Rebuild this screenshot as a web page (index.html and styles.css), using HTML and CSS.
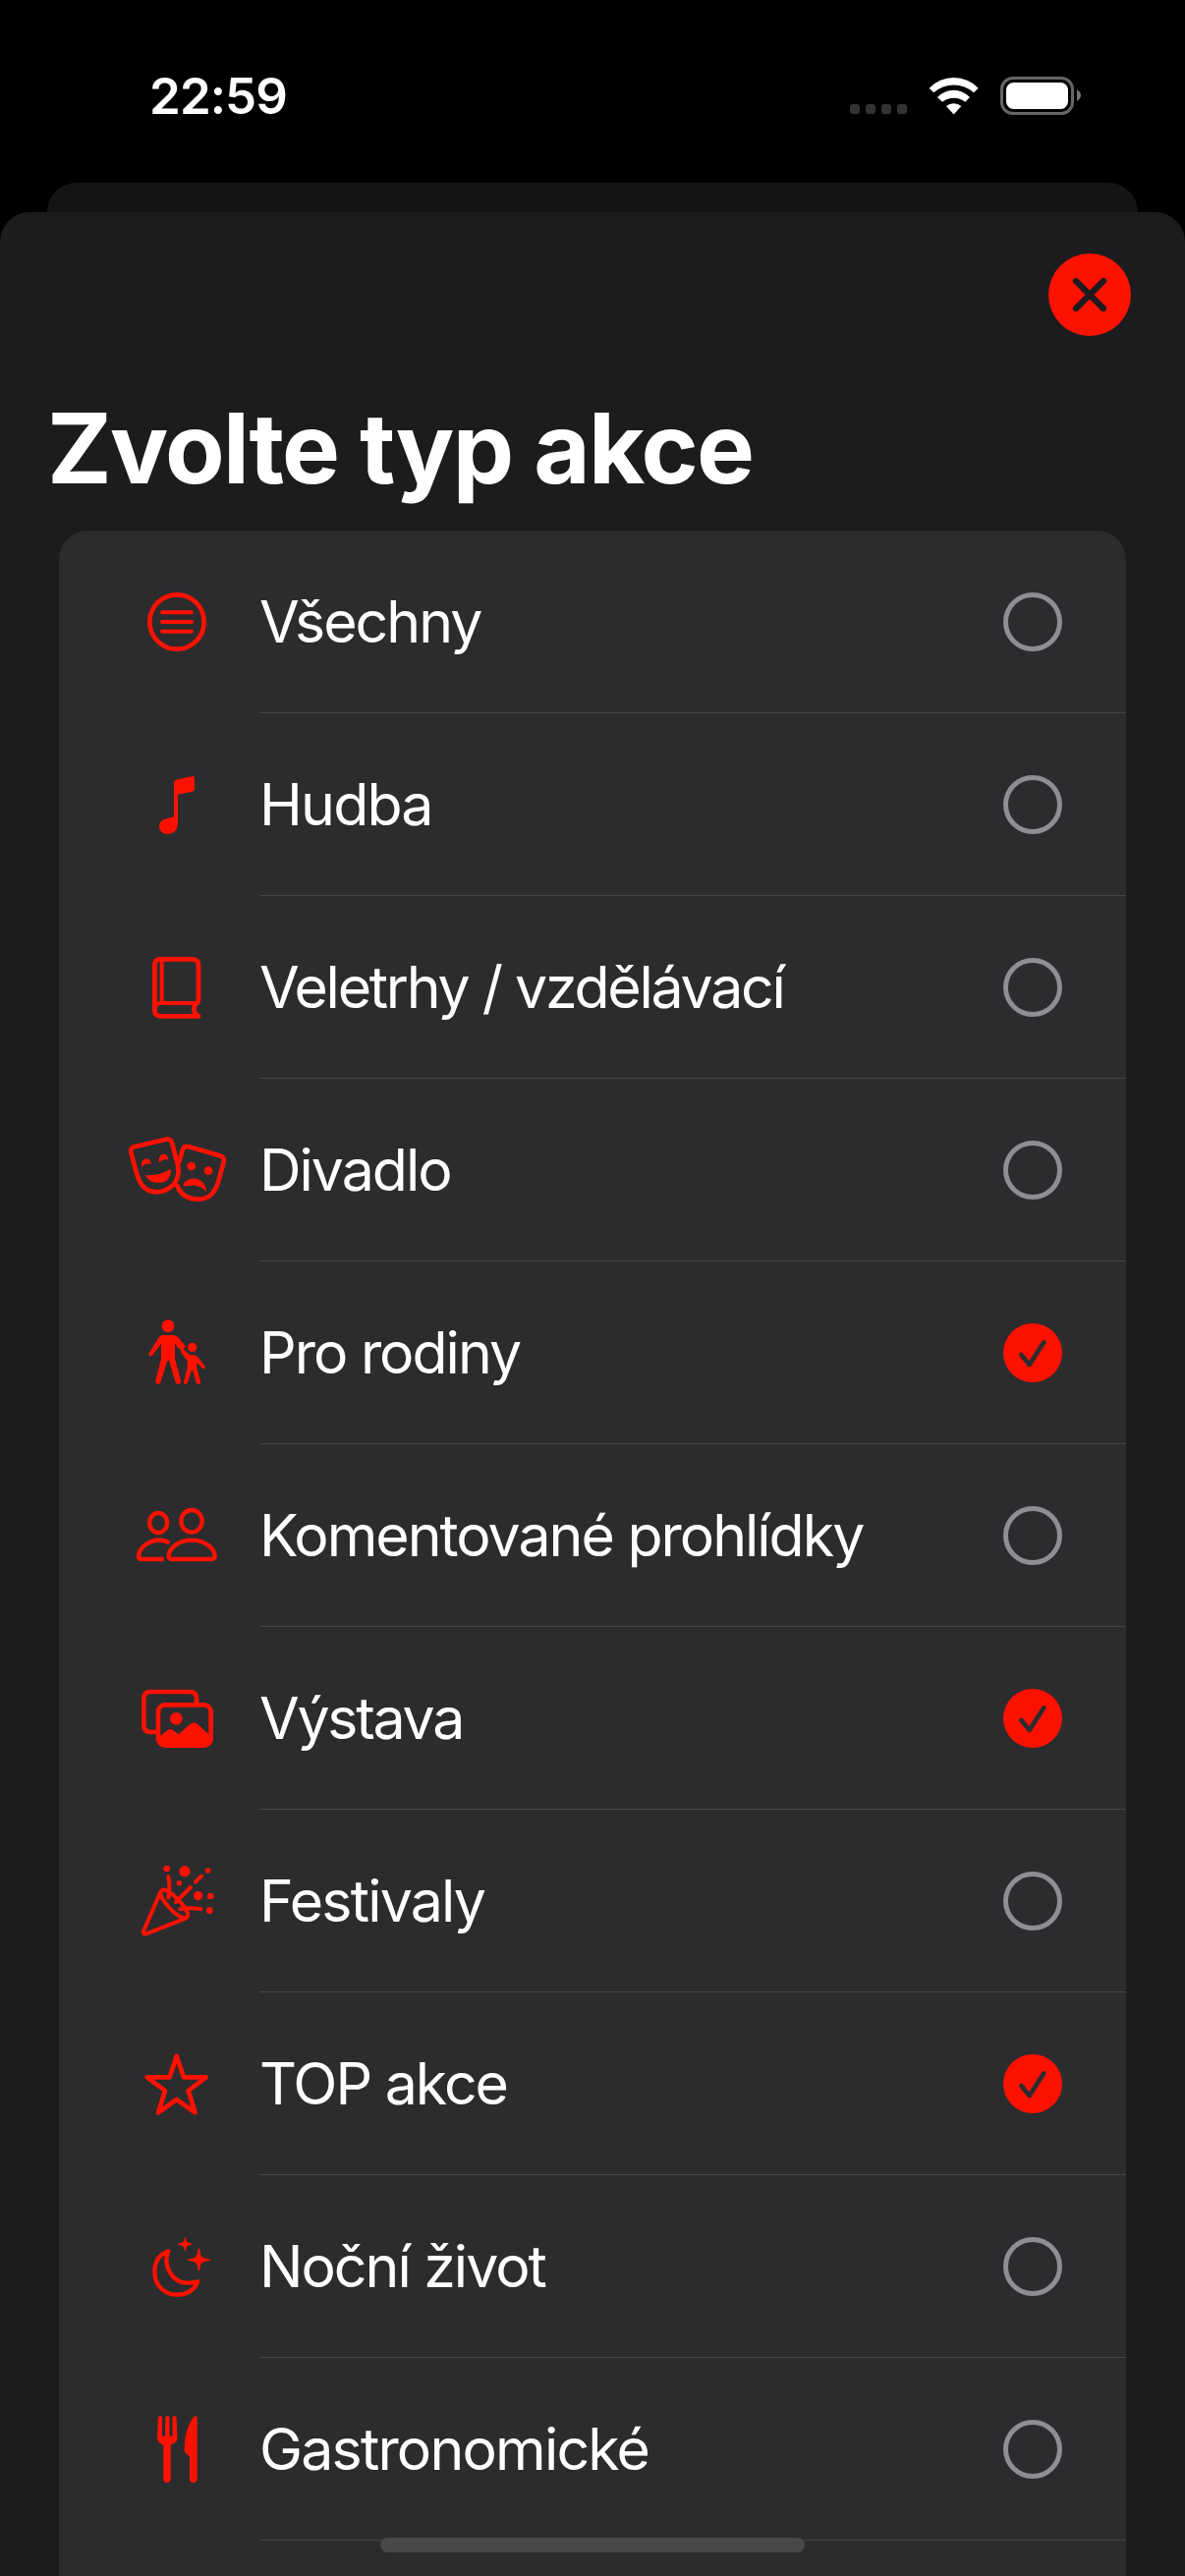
FILE: index.html
```html
<!DOCTYPE html>
<html lang="cs">
<head>
<meta charset="utf-8">
<title>Zvolte typ akce</title>
<link rel="stylesheet" href="styles.css">
</head>
<body>
<div class="screen">
  <header class="status">
    <span class="time">22:59</span>
    <div class="indicators">
      <svg class="signal" viewBox="42 84 180 117"><g fill="#333"><rect x="45" y="168" width="30" height="30" rx="9"/><rect x="93" y="168" width="30" height="30" rx="9"/><rect x="141" y="168" width="30" height="30" rx="9"/><rect x="189" y="168" width="30" height="30" rx="9"/></g></svg>
      <svg class="wifi" viewBox="285 84 153 117" fill="#fff"><path d="M287 119A104 104 0 0 1 437 119L423 133A92 92 0 0 0 301 133Z"/><path d="M312 147A68 68 0 0 1 411 147L397 161A57 57 0 0 0 327 161Z"/><path d="M339 174A36 36 0 0 1 385 174L364 197Q362 199 360 197Z"/></svg>
      <svg class="battery" viewBox="504 84 249 117"><rect x="508.5" y="88.500" width="216" height="108" rx="34" fill="none" stroke="#666" stroke-width="9"/><rect x="522" y="102" width="189" height="81" rx="23" fill="#fff"/><path d="M738 124Q750 131 750 141T738 159Z" fill="#757575"/></svg>
    </div>
  </header>
  <div class="backsheet"></div>
  <main class="sheet">
    <div class="toolbar">
      <button class="close" aria-label="Zavřít"><svg viewBox="0 0 84 84"><path d="M28 28L56 56M56 28L28 56"/></svg></button>
    </div>
    <h1 class="title">Zvolte typ akce</h1>
    <ul class="list">
      <li class="row">
        <svg class="icon" viewBox="30 -21 360 360"><circle class="line" cx="210" cy="159" r="83" stroke-width="14"/><path class="line" stroke-width="12" d="M165 130H255M165 159H255M165 188H255"/></svg>
        <div class="cell"><span class="label">Všechny</span><span class="radio"></span></div>
      </li>
      <li class="row">
        <svg class="icon" viewBox="30 537 360 360"><path class="solid" d="M201 650Q201 643 208 641L257 630Q264 629 264 636V668Q264 675 257 677L213 686V774C213 794 200 807 181 807C166 807 156 797 156 784C156 769 167 761 180 759L197 755Q201 754 201 749Z"/></svg>
        <div class="cell"><span class="label wide">Hudba</span><span class="radio"></span></div>
      </li>
      <li class="row">
        <svg class="icon" viewBox="30 1095 360 360"><path class="line" stroke-width="14" d="M276 1363H160Q142 1363 142 1344V1208Q142 1189 160 1189H257Q276 1189 276 1208V1310Q276 1321 268 1325Q256 1343 269 1358L276 1363"/><path class="line" stroke-width="12" d="M164 1194V1322M142 1344Q142 1323 162 1323H266"/></svg>
        <div class="cell"><span class="label tight">Veletrhy / vzdělávací</span><span class="radio"></span></div>
      </li>
      <li class="row">
        <svg class="icon" viewBox="30 3 360 360"><path class="line" stroke-width="14" d="M70 129Q67 116 80 112L177 89Q191 86 195 100L213 168Q220 203 200 227Q177 250 149 250Q109 250 93 210Q86 192 70 129Z"/><path class="line" stroke-width="14" d="M217 158L227 122Q232 108 245 111L341 139Q356 143 353 157L338 213Q323 272 276 272Q228 272 211 231"/><path class="solid" d="M114 198Q154 202 192 179Q192 222 152 222Q124 222 114 198ZM231 223Q245 207 267 209Q295 213 301 248Q301 249 298 247Q281 228 251 230Q235 232 231 232Q228 228 231 223Z"/><circle class="solid" cx="254" cy="171" r="13"/><circle class="solid" cx="306" cy="185" r="13"/><path class="solid" d="M102 171C99 143 130 141 132 166Q118 157 105 172Q103 173 102 171ZM155 157C153 129 182 127 184 152Q171 145 158 159Q156 160 155 157Z"/></svg>
        <div class="cell"><span class="label">Divadlo</span><span class="radio"></span></div>
      </li>
      <li class="row">
        <svg class="icon" viewBox="30 561 360 360"><circle class="solid" cx="183" cy="659" r="19"/><circle class="solid" cx="257" cy="724" r="14"/><path class="solid" d="M165 687H200Q211 688 218 698L236 720Q235 726 226 732L217 729L204 713V758L222 826C224 840 208 841 205 829L188 770Q184 757 179 770L161 829C157 841 143 839 145 826L162 758V713L136 748C129 756 120 748 126 740L150 701Q158 688 165 687Z"/><path class="solid" d="M222 732Q225 724 234 733L246 745Q250 748 256 748H263Q270 748 274 754L295 781C300 789 291 793 286 786L271 771V786L282 829C283 839 272 840 269 831L259 797Q257 789 254 797L243 831C240 840 229 838 231 829L242 786V765L225 743Q222 738 222 732Z"/></svg>
        <div class="cell"><span class="label">Pro rodiny</span><svg class="check" viewBox="0 0 180 180"><circle cx="90" cy="90" r="90"/><path d="M55 96L80 126L124 58"/></svg></div>
      </li>
      <li class="row">
        <svg class="icon" viewBox="30 9 360 360"><ellipse class="line" stroke-width="13" cx="255" cy="145" rx="32" ry="34"/><ellipse class="line" stroke-width="13" cx="153.500" cy="150" rx="27" ry="30"/><path class="line" stroke-width="13" d="M196 261Q185 261 185 252C185 230 214 203 255 203C297 203 326 230 326 252Q326 261 315 261Z"/><path class="line butt" stroke-width="13" d="M170 261H104Q93 261 93 251C95 222 142 187 187 211"/></svg>
        <div class="cell"><span class="label">Komentované prohlídky</span><span class="radio"></span></div>
      </li>
      <li class="row">
        <svg class="icon" viewBox="30 567 360 360"><path class="line butt" stroke-width="14" d="M147 789H130Q109 789 109 768V687Q109 666 130 666H249Q270 666 270 687V701"/><rect class="line" stroke-width="14" x="153" y="706" width="161" height="124" rx="21"/><circle class="solid" cx="208" cy="748" r="19"/><path class="solid" d="M155 804L182 783Q190 777 198 783L215 796L251 764Q262 755 273 764L312 800V816Q310 832 298 832H170Q155 830 155 816Z"/></svg>
        <div class="cell"><span class="label tight">Výstava</span><svg class="check" viewBox="0 0 180 180"><circle cx="90" cy="90" r="90"/><path d="M55 96L80 126L124 58"/></svg></div>
      </li>
      <li class="row">
        <svg class="icon" viewBox="30 15 360 360"><path class="line" stroke-width="12" d="M159 170L108 287Q105 297 117 295L236 248Q246 244 243 232C235 210 196 167 172 161Q162 159 160 170C162 192 203 241 233 247M184 121Q190 151 184 185M207 198L252 153M267 136L285 119M220 220Q252 214 283 219"/><circle class="solid" cx="179" cy="96" r="10"/><circle class="solid" cx="234" cy="104" r="17"/><circle class="solid" cx="305" cy="102" r="8"/><circle class="solid" cx="217" cy="140" r="8"/><circle class="solid" cx="275" cy="179" r="14"/><circle class="solid" cx="313" cy="180" r="10"/><circle class="solid" cx="310" cy="224" r="10"/></svg>
        <div class="cell"><span class="label wide">Festivaly</span><span class="radio"></span></div>
      </li>
      <li class="row">
        <svg class="icon" viewBox="30 573 360 360"><path class="line" stroke-width="14" d="M209 668L231 733H299L245 774L266 841L209 801L153 841L174 774L119 733H188Z"/></svg>
        <div class="cell"><span class="label">TOP akce</span><svg class="check" viewBox="0 0 180 180"><circle cx="90" cy="90" r="90"/><path d="M55 96L80 126L124 58"/></svg></div>
      </li>
      <li class="row">
        <svg class="icon" viewBox="30 21 360 360"><path class="line" stroke-width="13" d="M184 154C155 165 142 188 142 218C142 258 172 287 211 287C240 287 262 274 274 247C262 250 252 251 239 251C196 249 165 197 184 154Z"/><path class="solid" d="M235 111Q238 111 238 119Q239 127 249 129Q257 130 257 133Q257 135 249 136Q239 138 238 146Q237 154 235 154Q233 154 232 146Q231 138 221 136Q213 135 213 132Q213 130 221 129Q231 127 232 119Q233 111 235 111ZM277 146Q281 146 281 158Q283 173 297 176Q313 177 313 181Q313 183 297 185Q283 188 281 200Q280 214 277 214Q274 214 273 200Q271 188 257 185Q243 183 243 180Q243 177 257 176Q271 173 273 158Q274 146 277 146Z"/></svg>
        <div class="cell"><span class="label">Noční život</span><span class="radio"></span></div>
      </li>
      <li class="row">
        <svg class="icon" viewBox="30 579 360 360"><path class="solid" d="M153 663Q154 657 159 657Q165 657 165 663V716Q165 720 169 720T174 716L175 663Q175 657 181 657T187 663L188 716Q188 720 193 720T197 716V663Q197 657 203 657Q208 657 209 663L211 723C212 737 203 740 191 746V850Q191 861 180 861T169 850V746C158 740 150 737 150 723ZM272 662V850Q272 861 260 861T249 850V781Q233 770 233 762C233 720 242 687 261 661Q272 652 272 662Z"/></svg>
        <div class="cell"><span class="label wide">Gastronomické</span><span class="radio"></span></div>
      </li>
      <li class="row"></li>
    </ul>
  </main>
  <div class="home-indicator"></div>
</div>
</body>
</html>
```
FILE: styles.css
```css
* { box-sizing: border-box; }
body { margin: 0; background: #000; }
.screen {
  position: relative;
  display: flex;
  flex-direction: column;
  width: 1206px;
  height: 2622px;
  overflow: hidden;
  background: #000;
  color: #fff;
  font-family: Inter, "Liberation Sans", sans-serif;
}
.status {
  display: flex;
  flex: none;
  justify-content: space-between;
  height: 186px;
  padding: 67px 105px 0 152px;
}
.time { font-size: 51px; font-weight: 600; line-height: 62px; letter-spacing: -0.9px; }
.indicators { display: flex; align-items: flex-start; padding-top: 11px; }
.indicators svg { display: block; height: 39px; }
.signal { width: 60px; margin-right: 21px; }
.wifi { width: 51px; margin-right: 22px; }
.battery { width: 83px; }
.backsheet { flex: none; height: 30px; margin: 0 48px; border-radius: 30px 30px 0 0; background: #141414; }
.sheet {
  display: flex;
  flex: 1;
  flex-direction: column;
  min-height: 0;
  overflow: hidden;
  border-radius: 30px 30px 0 0;
  background: #1c1c1e;
}
.toolbar { display: flex; flex: none; justify-content: flex-end; height: 180px; padding: 42px 55px 0 0; }
.close { width: 84px; height: 84px; padding: 0; border: 0; border-radius: 50%; background: #ff1100; }
.close svg { display: block; }
.close path { stroke: #1c1c1e; stroke-width: 6.200; stroke-linecap: round; }
.title { flex: none; height: 144px; margin: 0; padding-left: 48px; font-size: 99px; font-weight: 700; line-height: 120px; letter-spacing: -1.7px; }
.list { flex: none; margin: 0 60px; padding: 0; border-radius: 30px 30px 0 0; background: #2c2c2e; list-style: none; }
.row { display: flex; align-items: center; height: 186px; padding-left: 60px; }
.icon { flex: none; width: 120px; height: 120px; margin-right: 24px; }
.line { fill: none; stroke: #ff1100; stroke-linecap: round; stroke-linejoin: round; }
.butt { stroke-linecap: butt; }
.solid { fill: #ff1100; }
.cell {
  display: flex;
  flex: 1;
  align-items: center;
  justify-content: space-between;
  height: 100%;
  padding-right: 65px;
  border-bottom: 1px solid #464648;
}
.label { font-size: 59px; font-weight: 400; letter-spacing: -2px; white-space: nowrap; }
.label.tight { letter-spacing: -2.250px; }
.label.wide { letter-spacing: -1.8px; }
.radio { width: 60px; height: 60px; border: 5px solid #8e8e93; border-radius: 50%; }
.check { width: 60px; height: 60px; }
.check circle { fill: #ff1100; }
.check path { fill: none; stroke: #2c2c2e; stroke-width: 14; stroke-linecap: round; stroke-linejoin: round; }
.home-indicator {
  position: absolute;
  left: 387px;
  bottom: 24px;
  width: 432px;
  height: 15px;
  border-radius: 8px;
  background: #484848;
}
```
